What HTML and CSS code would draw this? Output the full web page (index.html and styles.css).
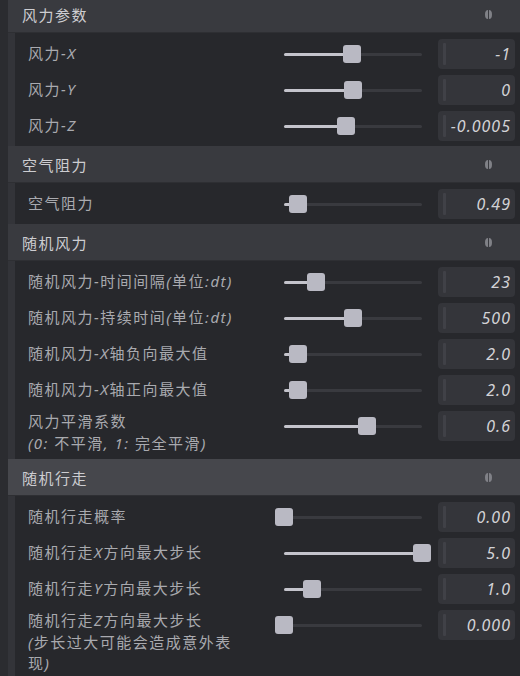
FILE: index.html
```html
<!DOCTYPE html>
<html lang="zh-CN">

<head>
  <meta charset="UTF-8">
  <meta name="viewport" content="width=device-width, initial-scale=1.0">
  <title>风力参数</title>
  <link rel="stylesheet" href="styles.css">
</head>

<body>

  <div id="panel">

    <!-- 风力参数 -->
    <div class="group">
      <div class="group-head">
        <span>风力参数</span>
        <svg class="fold" viewBox="0 0 7 9"><path d="M3 0A3 4.5 0 0 0 3 9Z"/><path d="M4 0A3 4.5 0 0 1 4 9Z"/></svg>
      </div>
      <div class="group-body">
        <div class="row">
          <div class="label">风力-X</div>
          <div class="slider" style="--v: 49%"><div class="fill"></div><div class="thumb"></div></div>
          <div class="value">-1</div>
        </div>
        <div class="row">
          <div class="label">风力-Y</div>
          <div class="slider" style="--v: 50%"><div class="fill"></div><div class="thumb"></div></div>
          <div class="value">0</div>
        </div>
        <div class="row">
          <div class="label">风力-Z</div>
          <div class="slider" style="--v: 45%"><div class="fill"></div><div class="thumb"></div></div>
          <div class="value">-0.0005</div>
        </div>
      </div>
    </div>

    <!-- 空气阻力 -->
    <div class="group">
      <div class="group-head">
        <span>空气阻力</span>
        <svg class="fold" viewBox="0 0 7 9"><path d="M3 0A3 4.5 0 0 0 3 9Z"/><path d="M4 0A3 4.5 0 0 1 4 9Z"/></svg>
      </div>
      <div class="group-body">
        <div class="row">
          <div class="label">空气阻力</div>
          <div class="slider" style="--v: 10%"><div class="fill"></div><div class="thumb"></div></div>
          <div class="value">0.49</div>
        </div>
      </div>
    </div>

    <!-- 随机风力 -->
    <div class="group">
      <div class="group-head">
        <span>随机风力</span>
        <svg class="fold" viewBox="0 0 7 9"><path d="M3 0A3 4.5 0 0 0 3 9Z"/><path d="M4 0A3 4.5 0 0 1 4 9Z"/></svg>
      </div>
      <div class="group-body">
        <div class="row">
          <div class="label">随机风力-时间间隔(单位:dt)</div>
          <div class="slider" style="--v: 23%"><div class="fill"></div><div class="thumb"></div></div>
          <div class="value">23</div>
        </div>
        <div class="row">
          <div class="label">随机风力-持续时间(单位:dt)</div>
          <div class="slider" style="--v: 50%"><div class="fill"></div><div class="thumb"></div></div>
          <div class="value">500</div>
        </div>
        <div class="row">
          <div class="label">随机风力-X轴负向最大值</div>
          <div class="slider" style="--v: 10%"><div class="fill"></div><div class="thumb"></div></div>
          <div class="value">2.0</div>
        </div>
        <div class="row">
          <div class="label">随机风力-X轴正向最大值</div>
          <div class="slider" style="--v: 10%"><div class="fill"></div><div class="thumb"></div></div>
          <div class="value">2.0</div>
        </div>
        <div class="row">
          <div class="label multi">风力平滑系数<br>(0: 不平滑, 1: 完全平滑)</div>
          <div class="slider" style="--v: 60%"><div class="fill"></div><div class="thumb"></div></div>
          <div class="value">0.6</div>
        </div>
      </div>
    </div>

    <!-- 随机行走 -->
    <div class="group">
      <div class="group-head hover">
        <span>随机行走</span>
        <svg class="fold" viewBox="0 0 7 9"><path d="M3 0A3 4.5 0 0 0 3 9Z"/><path d="M4 0A3 4.5 0 0 1 4 9Z"/></svg>
      </div>
      <div class="group-body">
        <div class="row">
          <div class="label">随机行走概率</div>
          <div class="slider" style="--v: 0%"><div class="fill"></div><div class="thumb"></div></div>
          <div class="value">0.00</div>
        </div>
        <div class="row">
          <div class="label">随机行走X方向最大步长</div>
          <div class="slider" style="--v: 100%"><div class="fill"></div><div class="thumb"></div></div>
          <div class="value">5.0</div>
        </div>
        <div class="row">
          <div class="label">随机行走Y方向最大步长</div>
          <div class="slider" style="--v: 20%"><div class="fill"></div><div class="thumb"></div></div>
          <div class="value">1.0</div>
        </div>
        <div class="row">
          <div class="label multi">随机行走Z方向最大步长<br>(步长过大可能会造成意外表现)</div>
          <div class="slider" style="--v: 0%"><div class="fill"></div><div class="thumb"></div></div>
          <div class="value">0.000</div>
        </div>
      </div>
    </div>

  </div>

</body>

</html>
```

FILE: styles.css
```css
body {
  margin: 0;
  height: 100vh;
  overflow: hidden;
  font-family: "Noto Sans", "Noto Sans CJK SC", sans-serif;
  background-color: #2b2c30;
  color: #a9aaaf;
}

#panel {
  margin: -4px 0 0 8px;
}

.group-head {
  display: flex;
  align-items: center;
  justify-content: space-between;
  height: 36px;
  padding: 0 28px 0 14px;
  background-color: #393a3f;
  border-bottom: 1px solid #2e2f33;
  color: #cdcdd1;
  font-size: 15px;
  letter-spacing: 1.5px;
}

.group-head.hover {
  background-color: #46474c;
}

.fold {
  width: 7px;
  height: 9px;
  fill: #808187;
}

.group-body {
  display: flex;
  flex-direction: column;
  gap: 6px;
  padding: 6px 5px 5px 13px;
  background-color: #27282c;
  border-left: 7px solid #333439;
}

.row {
  display: grid;
  grid-template-columns: 212px 1fr 77px;
  align-items: start;
}

.label {
  padding-top: 4px;
  font-size: 15px;
  line-height: 21.5px;
  letter-spacing: 1.5px;
  font-style: italic;
  font-synthesis: none;
}

.label.multi {
  padding-top: 0;
}

.slider {
  position: relative;
  height: 30px;
  margin: 0 16px 0 44px;
}

.slider::before,
.slider .fill {
  content: '';
  position: absolute;
  left: 0;
  top: 14px;
  height: 3px;
  border-radius: 2px;
}

.slider::before {
  right: 0;
  background-color: #393a3f;
}

.slider .fill {
  width: var(--v);
  background-color: #c4c4cc;
}

.slider .thumb {
  position: absolute;
  top: 6px;
  left: calc(var(--v) - 9px);
  width: 18px;
  height: 18px;
  border-radius: 3px;
  background-color: #b9b9c3;
}

.value {
  position: relative;
  height: 30px;
  line-height: 30px;
  padding-right: 4px;
  border-radius: 4px;
  background-color: #34353a;
  color: #d2d2d6;
  font-size: 16px;
  letter-spacing: 1px;
  font-style: italic;
  text-align: right;
}

.value::before {
  content: '';
  position: absolute;
  left: 5px;
  top: 4px;
  bottom: 4px;
  width: 3px;
  border-radius: 1px;
  background-color: #404147;
}
```
